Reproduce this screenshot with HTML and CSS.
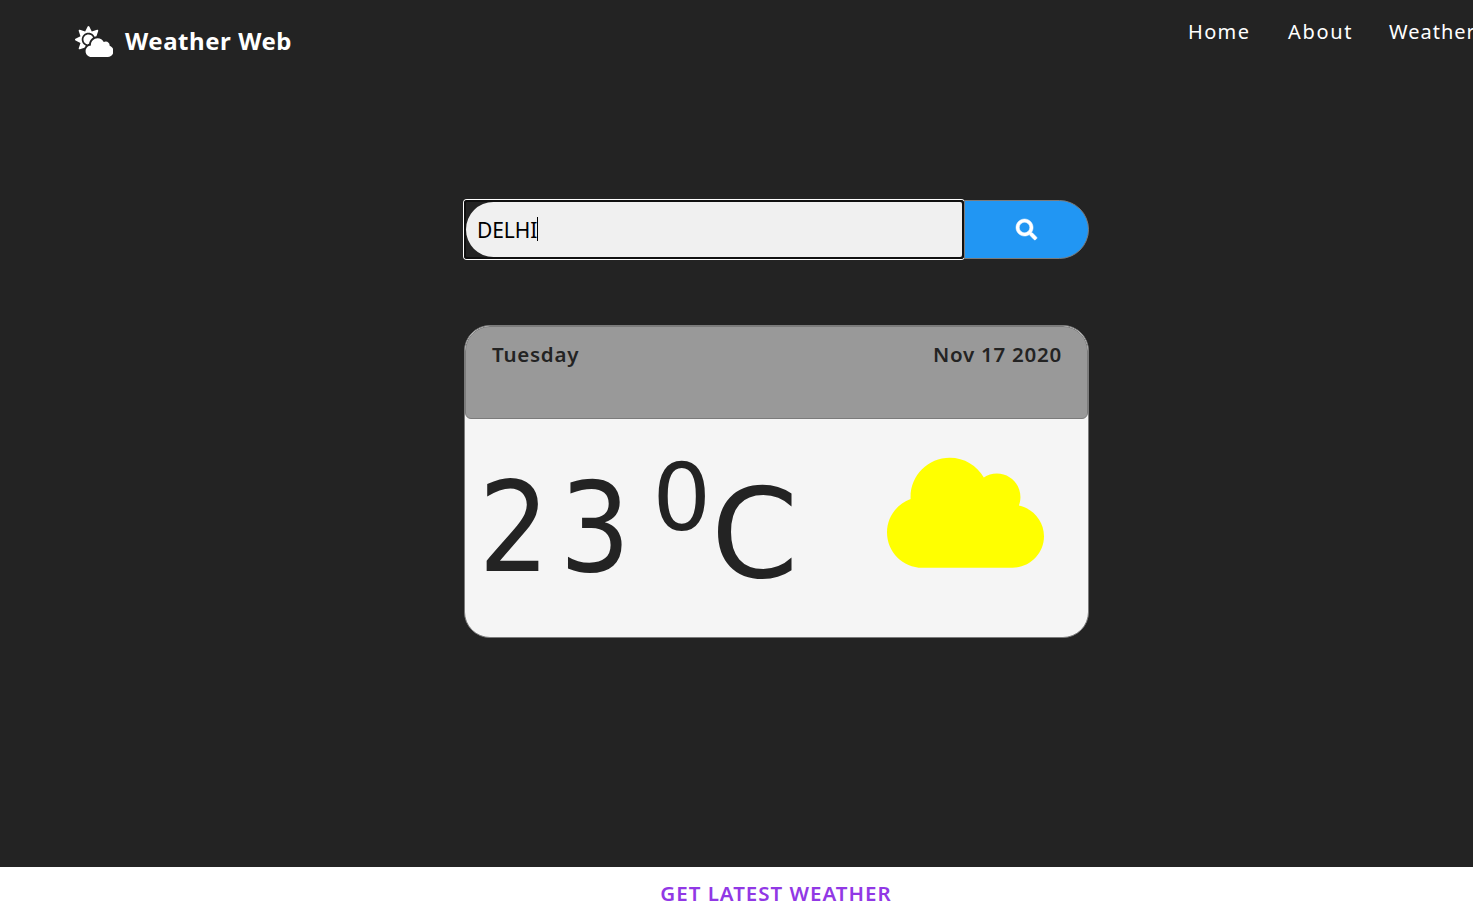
FILE: index.html
```html
<!DOCTYPE html>
<html lang="en">
<head>
<meta charset="utf-8">
<title>Weather Web</title>
<link rel="stylesheet" href="styles.css">
</head>
<body>
<header class="navbar">
  <a class="brand">
    <svg class="brand-icon" viewBox="0 0 640 512" fill="currentColor"><path d="M575.2 325.7c.2-1.9.8-3.7.8-5.6 0-35.3-28.7-64-64-64-12.6 0-24.2 3.8-34.1 10-17.6-38.8-56.5-66-101.9-66-61.8 0-112 50.1-112 112 0 3 .7 5.8.9 8.7-49.6 3.7-88.9 44.7-88.9 95.3 0 53 43 96 96 96h272c53 0 96-43 96-96 0-42.1-27.2-77.4-64.8-90.4zm-430.4-22.6c-43.7-43.7-43.7-114.7 0-158.3 43.7-43.7 114.7-43.7 158.4 0 9.7 9.7 16.9 20.9 22.3 32.7 9.8-3.7 20.1-6 30.7-7.5L386 81.1c4-11.9-7.3-23.1-19.2-19.2L279 91.2 237.5 8.4C232-2.8 216-2.8 210.4 8.4L169 91.2 81.1 61.9C69.3 58 58 69.3 61.9 81.1l29.3 87.8-82.8 41.5c-11.2 5.6-11.2 21.5 0 27.1l82.8 41.4-29.3 87.8c-4 11.9 7.3 23.1 19.2 19.2l76.1-25.3c6.1-12.4 14-23.7 23.6-33.5-13.1-5.4-25.4-13.4-36-24zm-4.8-79.2c0 40.8 29.3 74.8 67.9 82.3 8-4.7 16.3-8.8 25.2-11.7 5.4-44.3 31-82.5 67.4-105C287.3 160.4 258 140 224 140c-46.3 0-84 37.6-84 83.9z"/></svg>
    <span class="brand-name">Weather Web</span>
  </a>
  <nav class="links">
    <a class="link home">Home</a>
    <a class="link about">About</a>
    <a class="link weather">Weather</a>
  </nav>
</header>
<main class="content">
  <form class="search">
    <div class="field"><div class="field-fill"><span class="field-text">DELHI</span><span class="caret"></span></div></div>
    <button class="search-button" type="button" aria-label="Search">
      <svg class="search-icon" viewBox="0 0 512 512" fill="currentColor" stroke="currentColor" stroke-width="12"><path d="M505 442.7L405.3 343c-4.500-4.500-10.600-7-17-7H372c27.600-35.300 44-79.700 44-128C416 93.100 322.900 0 208 0S0 93.100 0 208s93.100 208 208 208c48.300 0 92.700-16.400 128-44v16.300c0 6.400 2.500 12.500 7 17l99.700 99.700c9.400 9.400 24.600 9.400 33.900 0l28.300-28.300c9.400-9.400 9.400-24.600.1-34zM208 336c-70.700 0-128-57.200-128-128 0-70.700 57.200-128 128-128 70.700 0 128 57.200 128 128 0 70.700-57.200 128-128 128z"/></svg>
    </button>
  </form>
  <section class="card">
    <div class="card-head"><span class="day">Tuesday</span><span class="date">Nov 17 2020</span></div>
    <div class="card-body">
      <div class="temp"><span class="value">23</span><span class="degree">0</span><span class="unit">C</span></div>
      <svg class="cloud" viewBox="0 0 640 512" fill="currentColor"><path d="M537.6 226.6c4.1-10.7 6.4-22.400 6.400-34.600 0-53-43-96-96-96-19.700 0-38.100 6-53.300 16.200C367 64.200 315.300 32 256 32c-88.400 0-160 71.600-160 160 0 2.700.1 5.400.2 8.100C40.200 219.800 0 273.200 0 336c0 79.500 64.500 144 144 144h368c70.700 0 128-57.300 128-128 0-61.900-44-113.600-102.400-125.400z"/></svg>
    </div>
  </section>
</main>
<footer class="footer"><span class="footer-text">GET LATEST WEATHER</span></footer>
</body>
</html>
```
FILE: styles.css
```css
* { box-sizing: border-box; }
body {
  margin: 0;
  height: 923px;
  overflow: hidden;
  display: flex;
  flex-direction: column;
  background: #232323;
  color: #232323;
  font-family: "Lucida Sans", "Noto Sans", "Open Sans", sans-serif;
  font-size: 21px;
}
.navbar {
  height: 200px;
  flex: none;
  display: flex;
  justify-content: space-between;
  align-items: flex-start;
  padding-left: 74.500px;
  color: #fff;
  white-space: nowrap;
}
.brand { display: flex; padding-top: 26px; }
.brand-icon { width: 38.500px; height: 31px; }
.brand-name {
  margin: 0 0 0 12px;
  font-size: 24px;
  font-weight: 700;
  line-height: 30px;
  letter-spacing: 0.550px;
}
.links { display: flex; width: 285px; padding-top: 17px; line-height: 30px; font-size: 20px; }
.link { flex: none; letter-spacing: 1.350px; }
.home { width: 100px; }
.about { width: 101px; letter-spacing: 1.650px; }
.weather { letter-spacing: 1px; }
.content { height: 667px; flex: none; padding-left: 464px; }
.search { display: flex; width: 625px; height: 59px; margin: 0; }
.field {
  width: 499.500px;
  height: 59px;
  padding: 2px;
  border-radius: 3px;
  background: #232323;
  box-shadow: inset 0 0 0 2px #101010, 0 0 0 1px #fff;
}
.field-fill {
  height: 55px;
  display: flex;
  align-items: center;
  padding-left: 11px;
  border-radius: 28px 2px 2px 28px;
  background: #f0f0f0;
  color: #000;
}
.field-text { letter-spacing: -0.100px; }
.caret { width: 1px; height: 24px; margin-top: -1px; background: #000; }
.search-button {
  width: 125px;
  margin-left: 0.500px;
  padding: 0 1px 1px 0;
  display: flex;
  align-items: center;
  justify-content: center;
  border: 1px solid #7b7b7b;
  border-radius: 0 30px 30px 0;
  background: #2196f3;
  color: #fff;
}
.search-icon { width: 21px; height: 21px; overflow: visible; }
.card {
  width: 625px;
  height: 313px;
  margin-top: 66px;
  border: 1px solid #7b7b7b;
  border-radius: 26px;
  background: #f5f5f5;
  overflow: hidden;
}
.card-head {
  height: 93px;
  display: flex;
  justify-content: space-between;
  padding: 13px 25px 0 26px;
  border: 1px solid #7b7b7b;
  border-radius: 25px 25px 6px 6px;
  background: #999;
  line-height: 29px;
  font-size: 20.500px;
  font-weight: 600;
  letter-spacing: 0.750px;
}
.card-body { display: flex; justify-content: space-between; padding: 0 44px 0 12.500px; }
.temp { display: flex; line-height: 174px; font-family: "DejaVu Sans", sans-serif; font-size: 126px; }
.value {
  width: 163px;
  padding: 22px 0 0 1px;
  font-family: "DejaVu Sans Condensed", "DejaVu Sans", sans-serif;
  font-stretch: semi-condensed;
  font-size: 124px;
  letter-spacing: 10px;
}
.degree { font-size: 92px; margin: -7px 0 0 12px; }
.unit { padding-top: 28px; font-size: 125px; }
.cloud { width: 157px; height: 125.600px; margin-top: 31px; color: #ff0; }
.footer {
  flex: 1;
  display: flex;
  justify-content: center;
  padding: 11px 0 0 79px;
  background: #fff;
  color: #9138e5;
  font-size: 20.500px;
  font-weight: 600;
  line-height: 30px;
  letter-spacing: 1px;
}
```
